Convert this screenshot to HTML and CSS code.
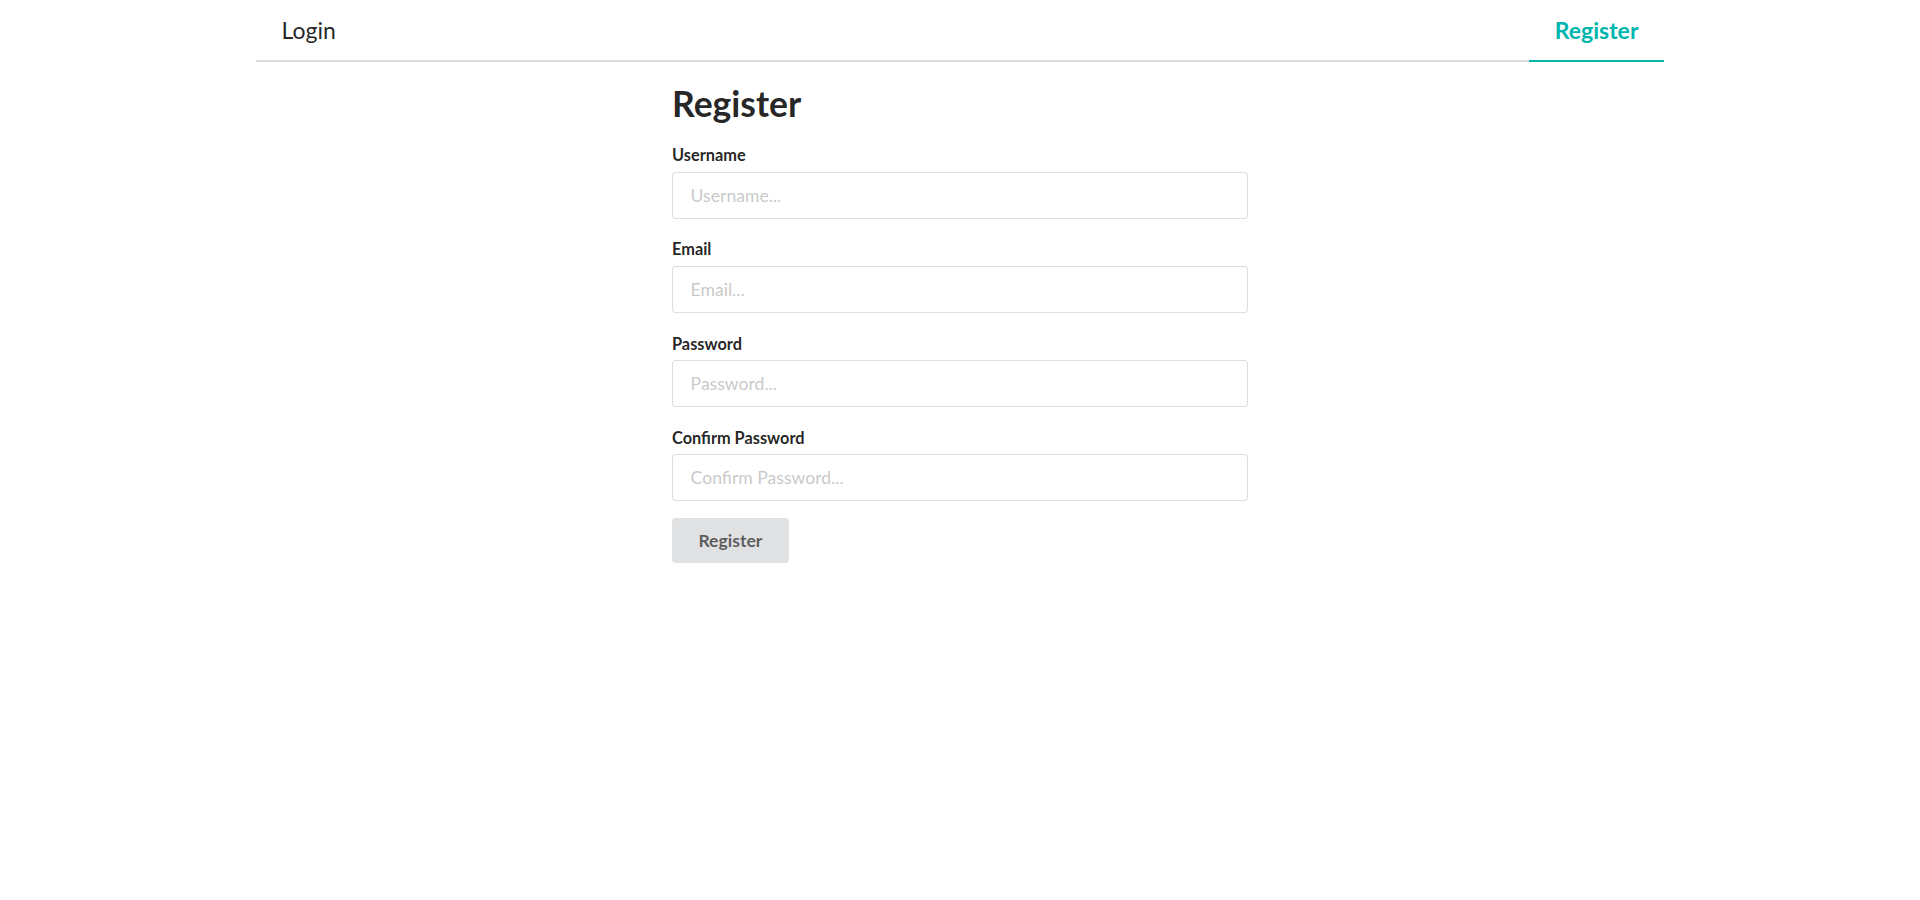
FILE: index.html
```html
<!DOCTYPE html>
<html lang="en">
<head>
<meta charset="utf-8">
<title>Register</title>
<link rel="stylesheet" href="styles.css">
</head>
<body>
<nav class="menu">
  <a class="item" href="#">Login</a>
  <a class="item active" href="#">Register</a>
</nav>
<main class="form-wrap">
  <h1 class="title">Register</h1>
  <form class="form">
    <div class="field">
      <label class="label" for="username">Username</label>
      <input class="input" id="username" type="text" placeholder="Username...">
    </div>
    <div class="field">
      <label class="label" for="email">Email</label>
      <input class="input" id="email" type="email" placeholder="Email...">
    </div>
    <div class="field">
      <label class="label" for="password">Password</label>
      <input class="input" id="password" type="password" placeholder="Password...">
    </div>
    <div class="field">
      <label class="label" for="confirm">Confirm Password</label>
      <input class="input" id="confirm" type="password" placeholder="Confirm Password...">
    </div>
    <button class="button" type="button">Register</button>
  </form>
</main>
</body>
</html>
```
FILE: styles.css
```css
html, body {
  margin: 0;
  padding: 0;
  background: #ffffff;
}
body {
  font-family: Lato, "Open Sans", "Liberation Sans", sans-serif;
  color: rgba(0, 0, 0, 0.87);
  font-size: 17.6px;
}
.menu {
  width: 1408px;
  margin: 0 auto 18.6px;
  display: flex;
  justify-content: space-between;
  border-bottom: 2px solid rgba(34, 36, 38, 0.15);
}
.item {
  display: block;
  font-size: 23px;
  line-height: 23px;
  padding: 18.5px 25.5px;
  margin-bottom: -2px;
  border-bottom: 2px solid transparent;
  color: rgba(0, 0, 0, 0.87);
  text-decoration: none;
}
.item.active {
  color: #00b5ad;
  border-bottom-color: #00b5ad;
  font-weight: 700;
}
.form-wrap {
  width: 576px;
  margin: 0 auto;
}
.title {
  font-size: 35.5px;
  line-height: 45.26px;
  font-weight: 700;
  margin: 0 0 17.6px;
}
.form {
  display: flex;
  flex-direction: column;
}
.field {
  display: flex;
  flex-direction: column;
  margin-bottom: 18.5px;
}
.field:last-of-type {
  margin-bottom: 17px;
}
.label {
  font-size: 16.34px;
  line-height: 23.3px;
  font-weight: 700;
  margin-bottom: 5px;
}
.input {
  font-family: inherit;
  font-size: 17.6px;
  line-height: 21.37px;
  padding: 11.94px 17.6px;
  border: 1px solid rgba(34, 36, 38, 0.15);
  border-radius: 4px;
  color: rgba(0, 0, 0, 0.87);
  outline: none;
  margin: 0;
}
.input::placeholder {
  color: rgba(191, 191, 191, 0.87);
}
.button {
  align-self: flex-start;
  font-family: inherit;
  font-size: 17.6px;
  line-height: 17.6px;
  font-weight: 700;
  padding: 13.83px 26.4px;
  border: none;
  border-radius: 4px;
  background: #e0e1e2;
  color: rgba(0, 0, 0, 0.6);
  margin: 0;
}
```
